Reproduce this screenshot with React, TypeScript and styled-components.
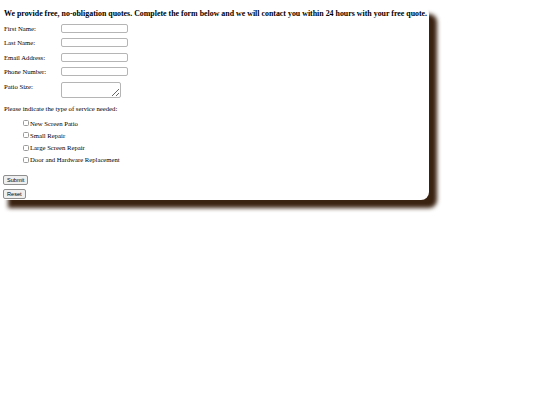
import styled, { createGlobalStyle } from 'styled-components'

const GlobalStyle = createGlobalStyle`
  html, body {
    margin: 0;
    padding: 0;
    background: #ffffff;
  }
  body {
    min-height: 100vh;
    font-family: "Liberation Serif", "Times New Roman", serif;
    color: #000;
  }
  #root {
    padding-top: 6px;
    padding-bottom: 20px;
  }
`

const Card = styled.div`
  width: 426px;
  padding: 3px 0 1px 3px;
  background: #fff;
  border-radius: 0 8px 8px 0;
  box-shadow: 8px 8px 4px #3b2312;
`

const Heading = styled.h4`
  margin: 0 0 6px 1px;
  font-size: 7.9px;
  font-weight: bold;
  white-space: nowrap;
`

const FieldRow = styled.div<{ $gap?: number }>`
  display: grid;
  grid-template-columns: 57px auto;
  align-items: start;
  margin-left: 1px;
  margin-bottom: ${({ $gap }) => $gap ?? 5.4}px;
  font-size: 6.7px;
`

const Label = styled.label`
  line-height: 9px;
`

const TextInput = styled.input`
  box-sizing: border-box;
  width: 67px;
  height: 9px;
  margin: 0;
  padding: 0 2px;
  border: 1px solid #b5b5b5;
  border-radius: 2px;
  font-size: 6px;
`

const TextArea = styled.textarea`
  box-sizing: border-box;
  width: 60px;
  height: 16px;
  margin: 0;
  border: 1px solid #b5b5b5;
  border-radius: 2px;
  font-size: 6px;
`

const Prompt = styled.p`
  margin: 7.5px 0 7.5px 1px;
  font-size: 6.7px;
`

const Options = styled.div`
  display: flex;
  flex-direction: column;
  gap: 5.3px;
  padding-left: 20px;
`

const Option = styled.label`
  display: flex;
  align-items: center;
  font-size: 6.7px;
  line-height: 7px;
`

const Check = styled.input`
  box-sizing: border-box;
  width: 6px;
  height: 6px;
  margin: 0 1px 0 0;
  appearance: none;
  border: 1px solid #9a9a9a;
  border-radius: 1.5px;
  background: #fff;
`

const Button = styled.button`
  display: block;
  box-sizing: border-box;
  height: 10px;
  padding: 0 3px;
  margin: 0;
  font-family: "Liberation Sans", Arial, sans-serif;
  font-size: 5.6px;
  line-height: 8px;
  color: #000;
  background: #efefef;
  border: 1px solid #8f8f8f;
  border-radius: 2px;
`

const ButtonStack = styled.div`
  display: flex;
  flex-direction: column;
  align-items: flex-start;
  gap: 4px;
  margin-top: 12px;
`

const fields = ['First Name:', 'Last Name:', 'Email Address:', 'Phone Number:']
const services = ['New Screen Patio', 'Small Repair', 'Large Screen Repair', 'Door and Hardware Replacement']

export default function App() {
  return (
    <>
      <GlobalStyle />
      <Card>
        <Heading>
          We provide free, no-obligation quotes. Complete the form below and we will contact you within 24 hours with your free quote.
        </Heading>
        <form>
          {fields.map((f) => (
            <FieldRow key={f}>
              <Label>{f}</Label>
              <TextInput type="text" />
            </FieldRow>
          ))}
          <FieldRow $gap={0}>
            <Label>Patio Size:</Label>
            <TextArea />
          </FieldRow>
          <Prompt>Please indicate the type of service needed:</Prompt>
          <Options>
            {services.map((s) => (
              <Option key={s}>
                <Check type="checkbox" />
                {s}
              </Option>
            ))}
          </Options>
          <ButtonStack>
            <Button type="button">Submit</Button>
            <Button type="button">Reset</Button>
          </ButtonStack>
        </form>
      </Card>
    </>
  )
}
